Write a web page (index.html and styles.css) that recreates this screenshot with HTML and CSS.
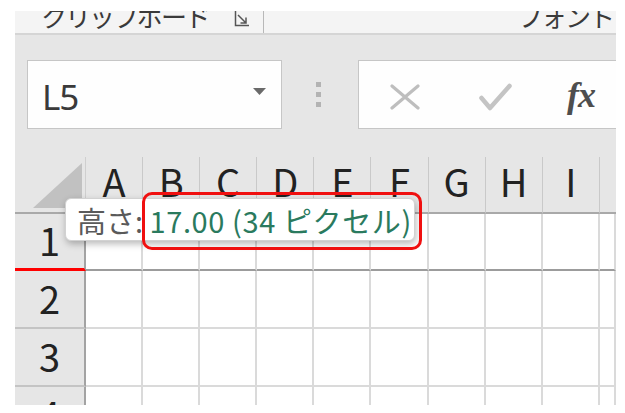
FILE: index.html
```html
<!DOCTYPE html>
<html lang="ja">
<head>
<meta charset="utf-8">
<title>Excel</title>
<link rel="stylesheet" href="styles.css">
</head>
<body>
<div class="app">
  <div class="ribbon">
    <div class="group group-clip">
      <span class="glabel">クリップボード</span>
      <svg class="launcher" width="16" height="18" viewBox="0 0 16 18">
        <path d="M1.5 0 V16.5 H15" fill="none" stroke="#555" stroke-width="1.5"/>
        <path d="M4 6 L12 14 M12 8.5 V14 H6.5" fill="none" stroke="#555" stroke-width="1.5"/>
      </svg>
    </div>
    <div class="group group-font">
      <span class="glabel">フォント</span>
    </div>
  </div>

  <div class="formula-bar">
    <div class="namebox">
      <span class="nb-text">L5</span>
      <svg class="nb-arrow" width="13" height="7" viewBox="0 0 13 7"><path d="M0 0 H13 L6.5 7 Z" fill="#6a6a6a"/></svg>
    </div>
    <div class="grip"><i></i><i></i><i></i></div>
    <div class="fbox">
      <svg class="ic-x" width="30" height="26" viewBox="0 0 30 26">
        <path d="M2 2 L28 24 M28 2 L2 24" stroke="#bebebe" stroke-width="3.2" stroke-linecap="round" fill="none"/>
      </svg>
      <svg class="ic-check" width="33" height="28" viewBox="0 0 33 28">
        <path d="M2.5 15 L11 25 L30.5 3" stroke="#c4c4c4" stroke-width="4.5" stroke-linecap="round" stroke-linejoin="round" fill="none"/>
      </svg>
      <span class="fx">fx</span>
    </div>
  </div>

  <div class="sheet">
    <div class="corner">
      <svg width="71" height="57" viewBox="0 0 71 57"><polygon points="18,51 67,51 67,6" fill="#c1c1c1"/></svg>
    </div>
    <div class="ch">A</div>
    <div class="ch">B</div>
    <div class="ch">C</div>
    <div class="ch">D</div>
    <div class="ch">E</div>
    <div class="ch">F</div>
    <div class="ch">G</div>
    <div class="ch">H</div>
    <div class="ch">I</div>
    <div class="ch ch-last"></div>

    <div class="rh rh-active">1</div>
    <div class="c r1"></div><div class="c r1"></div><div class="c r1"></div><div class="c r1"></div><div class="c r1"></div><div class="c r1"></div><div class="c r1"></div><div class="c r1"></div><div class="c r1"></div><div class="c r1"></div>

    <div class="rh">2</div>
    <div class="c"></div><div class="c"></div><div class="c"></div><div class="c"></div><div class="c"></div><div class="c"></div><div class="c"></div><div class="c"></div><div class="c"></div><div class="c"></div>

    <div class="rh">3</div>
    <div class="c"></div><div class="c"></div><div class="c"></div><div class="c"></div><div class="c"></div><div class="c"></div><div class="c"></div><div class="c"></div><div class="c"></div><div class="c"></div>

    <div class="rh">4</div>
    <div class="c"></div><div class="c"></div><div class="c"></div><div class="c"></div><div class="c"></div><div class="c"></div><div class="c"></div><div class="c"></div><div class="c"></div><div class="c"></div>
  </div>

  <div class="tooltip"><span class="tt-label">高さ:</span> <span class="tt-value">17.00 (34 ピクセル)</span></div>
  <div class="highlight"></div>
</div>
</body>
</html>
```

FILE: styles.css
```css
* { box-sizing: border-box; }

body {
  margin: 0;
  background: #ffffff;
  font-family: "Noto Sans CJK JP", "Noto Sans", sans-serif;
}

.app {
  position: relative;
  margin: 11px 0 0 15px;
  width: 601px;
  height: 394px;
  overflow: hidden;
  background: #e6e6e6;
}

/* ribbon group labels (clipped at top) */
.ribbon {
  height: 24px;
  display: flex;
  background: #f4f4f4;
  border-bottom: 2px solid #d5d5d5;
  overflow: hidden;
}
.group {
  display: flex;
  align-items: flex-start;
}
.group-clip {
  width: 249px;
  padding-left: 26px;
  border-right: 1px solid #b8b8b8;
}
.group-font {
  flex: 1;
  justify-content: flex-end;
  padding-right: 3px;
}
.glabel {
  font-size: 26px;
  line-height: 26px;
  margin-top: -8px;
  color: #3a3a3a;
  letter-spacing: -2px;
  white-space: nowrap;
}
.launcher {
  margin-left: auto;
  margin-right: 13px;
  margin-top: -2px;
}

/* formula bar */
.formula-bar {
  height: 122px;
  display: flex;
  align-items: flex-start;
  padding: 25px 0 0 12px;
}
.namebox {
  width: 255px;
  height: 69px;
  background: #fefefe;
  border: 1px solid #c6c6c6;
  display: flex;
  align-items: center;
  padding-left: 14px;
}
.nb-text {
  font-family: "Noto Sans", sans-serif;
  font-size: 35px;
  color: #3a3a3a;
  letter-spacing: -1px;
  padding-top: 4px;
}
.nb-arrow {
  margin-left: auto;
  margin-right: 15px;
  margin-top: -6px;
}
.grip {
  width: 76px;
  display: flex;
  flex-direction: column;
  align-items: center;
  gap: 5px;
  padding: 22px 3px 0 0;
}
.grip i {
  display: block;
  width: 5px;
  height: 5px;
  background: #b3b3b3;
}
.fbox {
  flex: 1;
  height: 69px;
  background: #fefefe;
  border: 1px solid #c6c6c6;
  border-right: none;
  display: flex;
  align-items: center;
  padding-left: 31px;
}
.ic-x { margin-top: 4px; }
.ic-check { margin-left: 59px; margin-top: 4px; }
.fx {
  margin-left: 55px;
  font-family: "Liberation Serif", serif;
  font-style: italic;
  font-weight: bold;
  font-size: 36px;
  color: #4e4e4e;
  letter-spacing: -1px;
}

/* sheet grid */
.sheet {
  display: grid;
  grid-template-columns: 71px repeat(9, 57.1px) 1fr;
  grid-template-rows: 57px 57px 58px 58px 58px;
}
.corner {
  background: #e6e6e6;
  border-right: 1px solid #cfcfcf;
  border-bottom: 2px solid #a9a9a9;
}
.corner svg { display: block; }
.ch {
  background: #e6e6e6;
  border-right: 1px solid #c9c9c9;
  border-bottom: 2px solid #a9a9a9;
  display: flex;
  align-items: center;
  justify-content: center;
  padding-bottom: 8px;
  font-size: 38px;
  color: #222;
  line-height: 1;
}
.ch-last { border-right: none; }
.rh {
  background: #e6e6e6;
  border-right: 2px solid #a3a3a3;
  border-bottom: 2px solid #c4c4c4;
  display: flex;
  align-items: center;
  justify-content: center;
  font-size: 38px;
  color: #222;
  line-height: 1;
  padding-bottom: 2px;
}
.rh-active {
  border-bottom: 3px solid #ff0000;
}
.c {
  background: #ffffff;
  border-right: 2px solid #dadada;
  border-bottom: 2px solid #dadada;
}
.c.r1 {
  border-bottom: 2px solid #9c9c9c;
}

/* tooltip overlay */
.tooltip {
  position: absolute;
  left: 50px;
  top: 187px;
  width: 350px;
  height: 43px;
  background: #ffffff;
  border: 1px solid #d2d2d2;
  border-radius: 6px;
  box-shadow: 1px 3px 7px rgba(0, 0, 0, 0.28);
  padding-left: 11px;
  font-size: 29px;
  line-height: 42px;
  white-space: nowrap;
}
.tt-label { color: #5a5a5a; }
.tt-value { color: #2a7a5e; letter-spacing: 0.6px; }

/* red annotation */
.highlight {
  position: absolute;
  left: 127px;
  top: 181px;
  width: 280px;
  height: 58px;
  border: 3px solid #f01010;
  border-radius: 10px;
}
```
